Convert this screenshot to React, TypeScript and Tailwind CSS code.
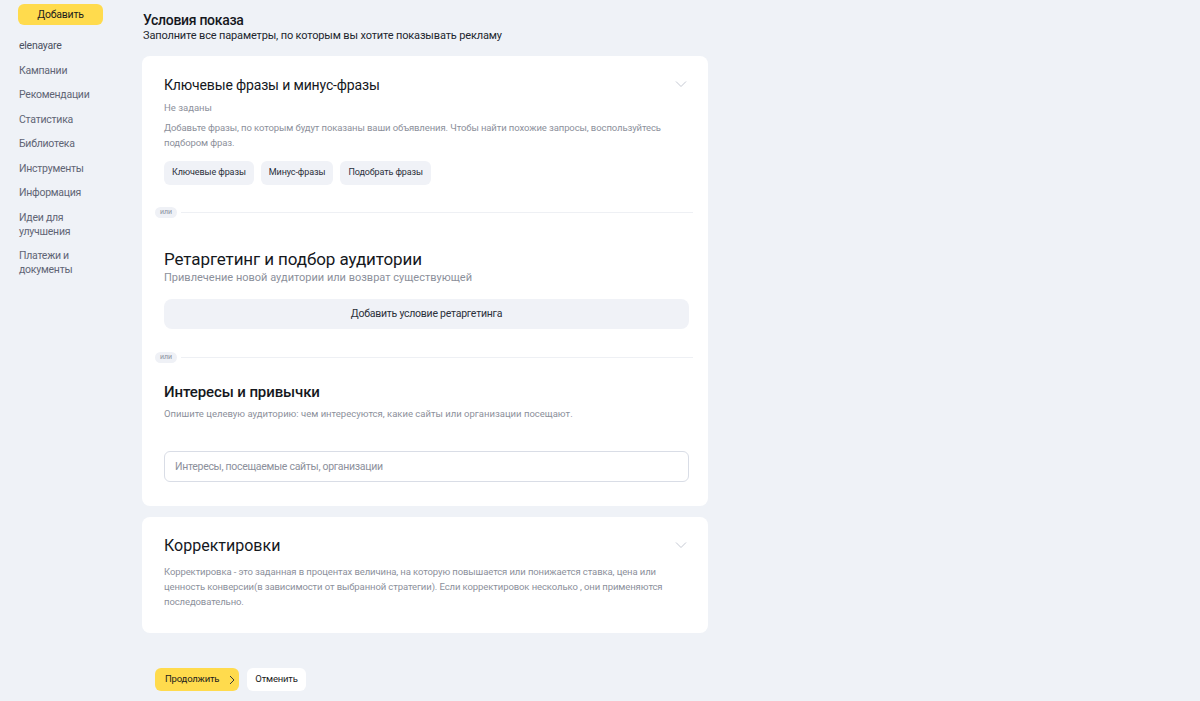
import React from 'react'

const NAV_ITEMS: string[][] = [
  ['elenayare'],
  ['Кампании'],
  ['Рекомендации'],
  ['Статистика'],
  ['Библиотека'],
  ['Инструменты'],
  ['Информация'],
  ['Идеи для', 'улучшения'],
  ['Платежи и', 'документы']
]

function Chevron({ className }: { className?: string }): React.JSX.Element {
  return (
    <svg width="12" height="8" viewBox="0 0 12 8" fill="none" className={className}>
      <path d="M1 1.5l5 5 5-5" stroke="#c5c9d3" strokeWidth="1" />
    </svg>
  )
}

function OrDivider(): React.JSX.Element {
  return (
    <div className="flex items-center ml-[13px] mr-[15px]">
      <span className="rounded-full bg-[#eff1f6] px-[5px] h-[11px] leading-[11px] text-[7px] text-[#8a8f9c]">
        или
      </span>
      <div className="flex-1 h-px bg-[#eef0f4] ml-[4px]" />
    </div>
  )
}

export default function App(): React.JSX.Element {
  return (
    <div
      className="flex min-h-[701px] w-[1200px] bg-[#eff2f7] text-[#21262e]"
      style={{ fontFamily: 'Roboto, "Noto Sans", sans-serif' }}
    >
      <aside className="w-[142px] shrink-0 pl-[18px] pt-[4px]">
        <button className="block w-[85px] h-[21px] rounded-[6px] bg-[#ffdb4d] text-[10.5px] tracking-[-0.2px] text-[#1c1c1c]">
          Добавить
        </button>
        <nav className="mt-[14px] flex flex-col gap-[10.5px] pl-[1px]">
          {NAV_ITEMS.map((lines, i) => (
            <div
              key={i}
              className={`text-[10.5px] tracking-[-0.25px] leading-[14px] ${i === 0 ? 'text-[#4a5060]' : 'text-[#5f6575]'}`}
            >
              {lines.map((l) => (
                <div key={l}>{l}</div>
              ))}
            </div>
          ))}
        </nav>
      </aside>

      <main className="flex flex-col w-[566px] pt-[11px]">
        <h1 className="ml-[1px] text-[14px] leading-[18px] font-medium tracking-[-0.3px] text-[#15181d]">
          Условия показа
        </h1>
        <p className="ml-[1px] text-[11px] leading-[14px] tracking-[-0.15px] text-[#21262e]">
          Заполните все параметры, по которым вы хотите показывать рекламу
        </p>

        <section className="mt-[13px] rounded-[8px] bg-white pt-[19px] pb-[24px]">
          <div className="px-[22px]">
            <div className="flex items-start justify-between">
              <h2 className="text-[14px] leading-[20px] tracking-[-0.15px] text-[#15181d]">
                Ключевые фразы и минус-фразы
              </h2>
              <Chevron className="mt-[5px] mr-[-1px]" />
            </div>
            <p className="mt-[6px] text-[9.5px] leading-[14px] text-[#8c909b]">Не заданы</p>
            <p className="mt-[5px] text-[9.5px] leading-[15px] tracking-[-0.1px] text-[#8c909b]">
              Добавьте фразы, по которым будут показаны ваши объявления. Чтобы найти похожие запросы, воспользуйтесь
              <br />
              подбором фраз.
            </p>
            <div className="mt-[11px] flex gap-[7px]">
              {['Ключевые фразы', 'Минус-фразы', 'Подобрать фразы'].map((t) => (
                <button
                  key={t}
                  className="h-[24px] px-[8px] rounded-[6px] bg-[#f0f2f7] text-[9px] tracking-[-0.1px] text-[#2b303a]"
                >
                  {t}
                </button>
              ))}
            </div>
          </div>

          <div className="mt-[22px]">
            <OrDivider />
          </div>

          <div className="px-[22px] mt-[30px]">
            <h2 className="text-[17px] leading-[22px] tracking-[-0.1px] text-[#15181d]">
              Ретаргетинг и подбор аудитории
            </h2>
            <p className="text-[11px] leading-[15px] text-[#8c909b]">Привлечение новой аудитории или возврат существующей</p>
            <button className="mt-[14px] w-[525px] h-[30px] rounded-[8px] bg-[#f0f2f7] text-[10.5px] tracking-[-0.25px] text-[#2b303a]">
              Добавить условие ретаргетинга
            </button>
          </div>

          <div className="mt-[23px]">
            <OrDivider />
          </div>

          <div className="px-[22px] mt-[19px]">
            <h2 className="text-[15px] leading-[20px] font-medium tracking-[-0.1px] text-[#15181d]">
              Интересы и привычки
            </h2>
            <p className="mt-[5px] text-[9.5px] leading-[14px] text-[#8c909b]">
              Опишите целевую аудиторию: чем интересуются, какие сайты или организации посещают.
            </p>
            <div className="mt-[30px] w-[525px] h-[31px] rounded-[6px] border border-[#d9dde6] flex items-center px-[10px]">
              <span className="text-[10.5px] tracking-[-0.3px] text-[#8c909b]">
                Интересы, посещаемые сайты, организации
              </span>
            </div>
          </div>
        </section>

        <section className="mt-[11px] rounded-[8px] bg-white pt-[19px] pb-[24px] px-[22px]">
          <div className="flex items-start justify-between">
            <h2 className="text-[16px] leading-[20px] text-[#15181d]">Корректировки</h2>
            <Chevron className="mt-[5px] mr-[-1px]" />
          </div>
          <p className="mt-[8px] text-[9.5px] leading-[15px] tracking-[-0.1px] text-[#8c909b]">
            Корректировка - это заданная в процентах величина, на которую повышается или понижается ставка, цена или
            <br />
            ценность конверсии(в зависимости от выбранной стратегии). Если корректировок несколько , они применяются
            <br />
            последовательно.
          </p>
        </section>

        <div className="mt-[35px] ml-[13px] flex gap-[8px]">
          <button className="h-[23px] w-[84px] rounded-[6px] bg-[#ffdb4d] flex items-center pl-[10px] gap-[10px] text-[9.5px] tracking-[-0.2px] text-[#1c1c1c]">
            Продолжить
            <svg width="6" height="10" viewBox="0 0 6 10" fill="none">
              <path d="M1 1l4 4-4 4" stroke="#3a3a3a" strokeWidth="1" />
            </svg>
          </button>
          <button className="h-[23px] w-[59px] rounded-[6px] bg-white text-[9.5px] tracking-[-0.2px] text-[#1c1c1c]">
            Отменить
          </button>
        </div>
      </main>
    </div>
  )
}
